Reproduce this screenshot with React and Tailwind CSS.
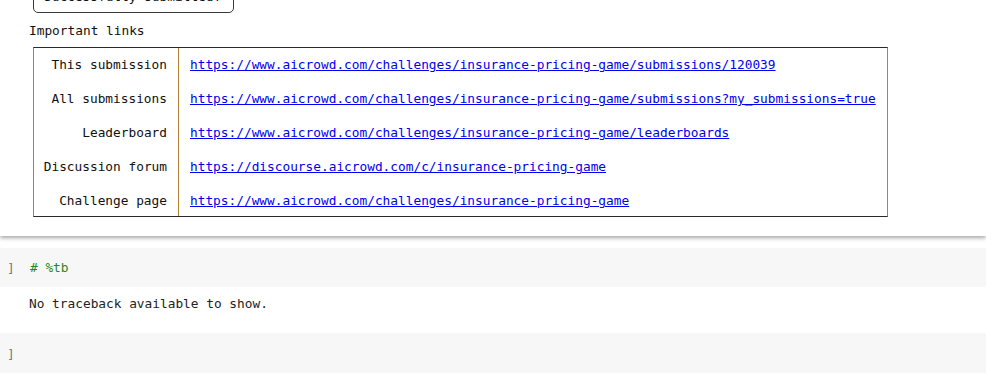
const links = [
  ["This submission", "https://www.aicrowd.com/challenges/insurance-pricing-game/submissions/120039"],
  ["All submissions", "https://www.aicrowd.com/challenges/insurance-pricing-game/submissions?my_submissions=true"],
  ["Leaderboard", "https://www.aicrowd.com/challenges/insurance-pricing-game/leaderboards"],
  ["Discussion forum", "https://discourse.aicrowd.com/c/insurance-pricing-game"],
  ["Challenge page", "https://www.aicrowd.com/challenges/insurance-pricing-game"]
];

const mono = "font-['DejaVu_Sans_Mono','Liberation_Mono',monospace] text-[12.8px]";

export default function App() {
  return (
    <div className={`h-[382px] w-[986px] overflow-hidden bg-white text-[#111] ${mono}`}>
      <div className="relative z-10 flex h-[236px] flex-col bg-white shadow-[0_2px_4px_rgba(0,0,0,0.35)]">
        <div className="pl-[33px]">
          <div className="mt-[-19px] w-[201px] whitespace-nowrap rounded-[5px] border border-[#3a3a3a] px-[10px] pt-[6px] pb-[6px] leading-[18px]">
            Successfully submitted!
          </div>
        </div>
        <div className="mt-[9px] pl-[29px] leading-[17px]">Important links</div>
        <div className="ml-[33px] mt-[8px] w-[855px] border-y border-y-[#2a2a2a] border-x border-x-[#b7803a]">
          <div className="flex">
            <div className="w-[145px] shrink-0 border-r border-r-[#b7803a]">
              {links.map(([label], i) => (
                <div key={label} className={`flex items-center justify-end pr-[11px] ${i === 4 ? "h-[32px] pt-[2px]" : "h-[34px]"}`}>
                  {label}
                </div>
              ))}
            </div>
            <div className="flex-1">
              {links.map(([label, href], i) => (
                <div key={label} className={`flex items-center pl-[11px] ${i === 4 ? "h-[32px] pt-[2px]" : "h-[34px]"}`}>
                  <a href={href} className="text-[#0000ee] underline">{href}</a>
                </div>
              ))}
            </div>
          </div>
        </div>
      </div>

      <div className="mt-[12px] flex h-[39px] items-center bg-[#f7f7f7] leading-[17px]">
        <span className="w-[30px] pl-[7px] text-[#777]">]</span>
        <span className="text-[#1f8a1f]"># %tb</span>
      </div>
      <div className="h-[46px] pl-[29px] pt-[8px] leading-[17px] text-[#222]">
        No traceback available to show.
      </div>
      <div className="flex h-[40px] items-center bg-[#f7f7f7] leading-[17px]">
        <span className="pl-[7px] text-[#777]">]</span>
      </div>
    </div>
  );
}
